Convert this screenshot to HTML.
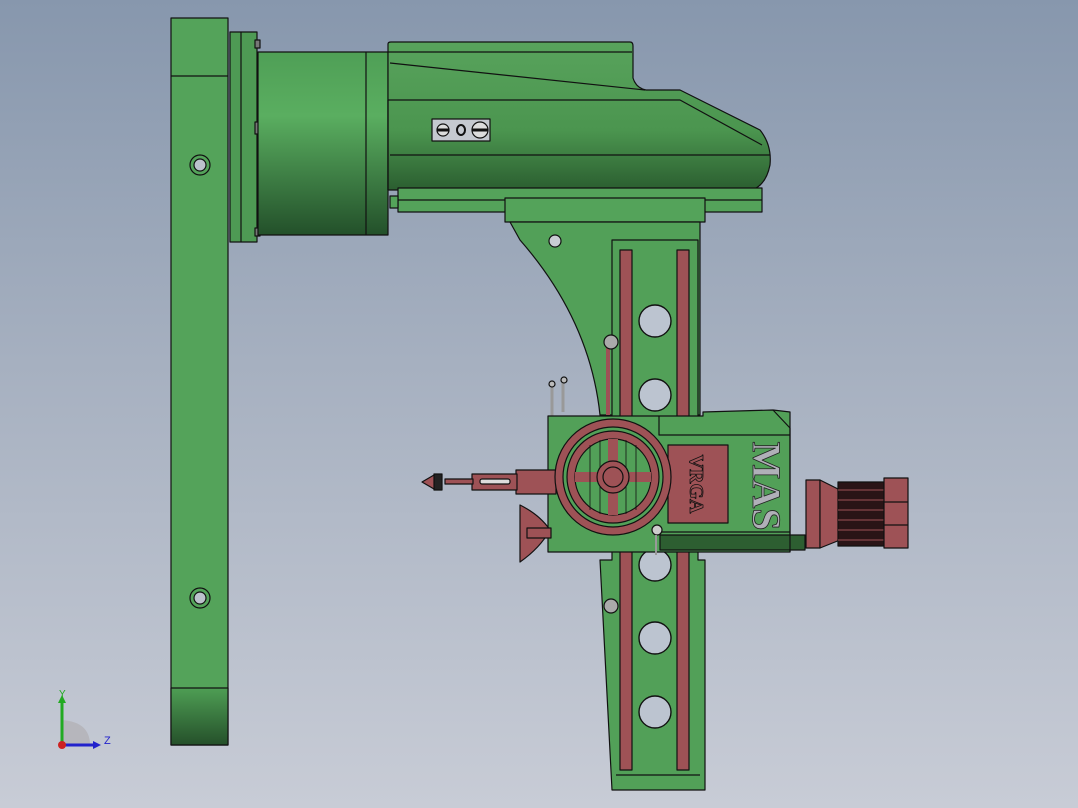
<!DOCTYPE html>
<html><head><style>
html,body{margin:0;padding:0;width:1078px;height:808px;overflow:hidden}
body{background:linear-gradient(180deg,#8797ad 0%,#a6b0c0 45%,#c8ccd6 100%)}
svg{position:absolute;left:0;top:0}
</style></head><body>
<svg width="1078" height="808" viewBox="0 0 1078 808" xmlns="http://www.w3.org/2000/svg">
<defs>
<linearGradient id="cyl" x1="0" y1="0" x2="0" y2="1">
<stop offset="0" stop-color="#4f9f56"/><stop offset="0.35" stop-color="#5aae60"/><stop offset="1" stop-color="#23502a"/></linearGradient>
<linearGradient id="body" x1="0" y1="0" x2="0" y2="1">
<stop offset="0" stop-color="#58a35c"/><stop offset="0.6" stop-color="#4b954f"/><stop offset="1" stop-color="#2b5e30"/></linearGradient>
<linearGradient id="bot" x1="0" y1="0" x2="0" y2="1">
<stop offset="0" stop-color="#4e9e54"/><stop offset="1" stop-color="#25502a"/></linearGradient>
</defs>
<g stroke="#111" stroke-width="1.2" stroke-linejoin="round">
<rect x="171" y="18" width="57" height="727" fill="#54a35a"/>
<line x1="171" y1="76" x2="228" y2="76"/>
<rect x="171" y="688" width="57" height="57" fill="url(#bot)"/>
<circle cx="200" cy="165" r="10" fill="#54a35a"/><circle cx="200" cy="165" r="6" fill="#bcc2cc"/>
<circle cx="200" cy="598" r="10" fill="#54a35a"/><circle cx="200" cy="598" r="6" fill="#bcc2cc"/>
<rect x="230" y="32" width="27" height="210" fill="#4e9a54"/>
<line x1="241" y1="32" x2="241" y2="242"/>
<rect x="255" y="40" width="5" height="8" fill="#777"/>
<rect x="255" y="122" width="5" height="12" fill="#777"/>
<rect x="255" y="228" width="5" height="8" fill="#777"/>
<rect x="258" y="52" width="130" height="183" fill="url(#cyl)"/>
<line x1="366" y1="52" x2="366" y2="235"/>
<path d="M388 44 Q388 42 391 42 L630 42 Q633 42 633 46 L633 78 Q636 88 646 90 L680 90 L760 130 Q772 145 770 165 Q766 185 752 190 L388 190 Z" fill="url(#body)"/>
<path d="M388 52 L632 52 M390 63 L645 90 M388 100 L680 100 L762 145 M390 155 L770 155" fill="none"/>
<line x1="388" y1="100" x2="388" y2="190"/>
<rect x="432" y="119" width="58" height="22" fill="#c5c9d0"/>
<circle cx="443" cy="130" r="6" fill="#ddd"/><line x1="437" y1="130" x2="449" y2="130" stroke-width="3"/>
<ellipse cx="461" cy="130" rx="4" ry="5" fill="none" stroke-width="2"/>
<circle cx="480" cy="130" r="8" fill="#ddd"/><line x1="472" y1="130" x2="488" y2="130" stroke-width="3"/>
<rect x="398" y="188" width="364" height="24" fill="#54a35a"/>
<line x1="398" y1="200" x2="762" y2="200"/>
<rect x="390" y="196" width="8" height="12" fill="#54a35a"/>
<rect x="505" y="198" width="200" height="24" fill="#54a35a"/>
<path d="M510 222 L700 222 L700 415 L600 415 Q590 320 520 240 Z" fill="#52a058"/>
<circle cx="555" cy="241" r="6" fill="#c8ccd3"/>
<path d="M612 240 L698 240 L698 560 L705 560 L705 790 L612 790 L600 560 L612 560 Z" fill="#52a058"/>
<rect x="620" y="250" width="12" height="520" fill="#9e5256"/>
<rect x="677" y="250" width="12" height="520" fill="#9e5256"/>
<line x1="616" y1="775" x2="700" y2="775"/>
<g fill="#bcc4d0" stroke-width="1.4">
<circle cx="655" cy="321" r="16"/><circle cx="655" cy="395" r="16"/>
<circle cx="655" cy="565" r="16"/><circle cx="655" cy="638" r="16"/><circle cx="655" cy="712" r="16"/>
</g>
<line x1="608" y1="345" x2="608" y2="415" stroke="#9e5256" stroke-width="4"/>
<circle cx="611" cy="342" r="7" fill="#aaa"/>
<circle cx="611" cy="606" r="7" fill="#aaa"/>
<line x1="552" y1="385" x2="552" y2="440" stroke="#999" stroke-width="3"/>
<line x1="563" y1="382" x2="563" y2="412" stroke="#999" stroke-width="3"/>
<circle cx="552" cy="384" r="3" fill="#bbb"/><circle cx="564" cy="380" r="3" fill="#bbb"/>
<path d="M548 416 L703 416 L703 412 L773 410 L790 412 L790 552 L548 552 Z" fill="#52a058"/>
<path d="M660 535 L805 535 L805 550 L660 550 Z" fill="#2d5e31"/>
<path d="M659 416 L659 435 L790 435 M659 532 L790 532" fill="none"/>
<path d="M773 410 L790 428 L790 552" fill="none"/>
<rect x="668" y="445" width="60" height="78" fill="#9e5256"/>
<text x="0" y="0" transform="translate(690,484) rotate(90)" font-family="Liberation Serif,serif" font-weight="bold" font-size="20" fill="#9e5256" stroke="#111" stroke-width="0.8" text-anchor="middle">VRGA</text>
<text x="0" y="0" transform="translate(753,486) rotate(90)" font-family="Liberation Serif,serif" font-weight="bold" font-size="40" fill="#b0b0b8" stroke="#222" stroke-width="0.8" text-anchor="middle">MAS</text>
<rect x="516" y="470" width="40" height="24" fill="#9e5256"/>
<rect x="472" y="474" width="45" height="16" fill="#9e5256"/>
<rect x="480" y="479" width="30" height="5" rx="2" fill="#ddd"/>
<rect x="445" y="479" width="28" height="5" fill="#9e5256"/>
<rect x="434" y="474" width="8" height="16" fill="#222"/>
<path d="M422 482 L434 475 L434 489 Z" fill="#9e5256"/>
<path d="M520 505 Q540 515 550 530 Q540 548 520 562 Z" fill="#9e5256"/>
<rect x="527" y="528" width="24" height="10" fill="#9e5256"/>
<circle cx="613" cy="477" r="58" fill="#9e5256"/>
<circle cx="613" cy="477" r="50" fill="#52a058"/>
<circle cx="613" cy="477" r="46" fill="#9e5256"/>
<circle cx="613" cy="477" r="38" fill="#52a058"/>
<path d="M575 477 L651 477 M613 439 L613 515" stroke="#9e5256" stroke-width="10"/>
<g fill="none" stroke-width="0.8"><line x1="590" y1="445" x2="590" y2="510"/><line x1="636" y1="445" x2="636" y2="510"/><line x1="600" y1="440" x2="600" y2="514"/><line x1="626" y1="440" x2="626" y2="514"/></g>
<circle cx="613" cy="477" r="16" fill="#9e5256"/>
<circle cx="613" cy="477" r="10" fill="#9e5256"/>
<circle cx="657" cy="530" r="5" fill="#ccc"/>
<line x1="656" y1="535" x2="656" y2="555" stroke="#999" stroke-width="2"/>
<rect x="806" y="480" width="14" height="68" fill="#9e5256"/>
<path d="M820 480 L840 490 L840 540 L820 548 Z" fill="#9e5256"/>
<rect x="838" y="482" width="46" height="64" fill="#2a1416"/>
<g stroke="#9e5256" stroke-width="1"><line x1="838" y1="490" x2="884" y2="490"/><line x1="838" y1="500" x2="884" y2="500"/><line x1="838" y1="510" x2="884" y2="510"/><line x1="838" y1="520" x2="884" y2="520"/><line x1="838" y1="530" x2="884" y2="530"/><line x1="838" y1="540" x2="884" y2="540"/></g>
<rect x="884" y="478" width="24" height="70" fill="#9e5256"/>
<line x1="884" y1="502" x2="908" y2="502"/><line x1="884" y1="525" x2="908" y2="525"/>
</g>
<path d="M62 720 L62 745 L90 745 Q90 722 62 720Z" fill="#b6b6bc"/>
<line x1="62" y1="745" x2="62" y2="700" stroke="#2a2" stroke-width="3"/>
<path d="M58 703 L62 695 L66 703Z" fill="#2a2"/>
<line x1="62" y1="745" x2="95" y2="745" stroke="#22c" stroke-width="3"/>
<path d="M93 741 L101 745 L93 749Z" fill="#22c"/>
<circle cx="62" cy="745" r="4" fill="#c22"/>
<text x="59" y="697" font-family="Liberation Sans,sans-serif" font-size="10" fill="#2a2">Y</text>
<text x="104" y="744" font-family="Liberation Sans,sans-serif" font-size="11" fill="#22c">Z</text>
</svg>
</body></html>
